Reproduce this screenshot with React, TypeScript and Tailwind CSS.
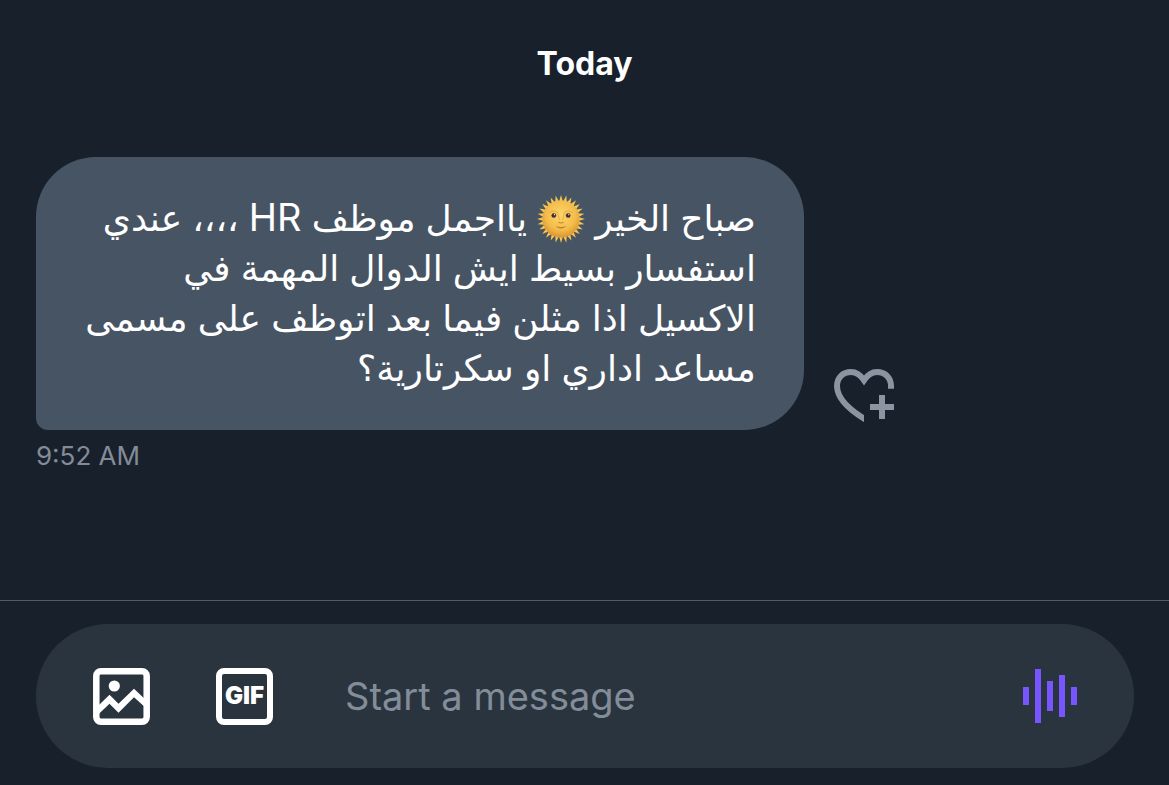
import { useState } from 'react';

interface Message {
  id: string;
  time: string;
}

const messages: Message[] = [{ id: 'm1', time: '9:52 AM' }];

const RAY_COUNT = 28;

const rays = Array.from({ length: RAY_COUNT }, (_, i) => (i * 360) / RAY_COUNT);

function SunFace() {
  return (
    <svg viewBox="0 0 48 48" role="img" aria-label="🌞" className="inline-block size-12 align-[-12px]">
      <defs>
        <radialGradient id="sun-face" cx="0.5" cy="0.4" r="0.6">
          <stop offset="0" stopColor="#fbd768" />
          <stop offset="0.65" stopColor="#f3bd4c" />
          <stop offset="1" stopColor="#dd9430" />
        </radialGradient>
      </defs>
      {rays.map((angle) => (
        <path key={angle} d="M22 7 L24 0 L26 7 Z" fill="#f8c651" transform={`rotate(${angle} 24 24)`} />
      ))}
      <circle cx="24" cy="24" r="18.6" fill="url(#sun-face)" />
      <path d="M12.5 17.5 Q16 14.5 20.5 17 L22.5 25" fill="none" stroke="#e0a344" strokeWidth="0.8" />
      <path d="M35.5 17.5 Q32 14.5 27.5 17 L25.5 25" fill="none" stroke="#e0a344" strokeWidth="0.8" />
      <path d="M21.5 27 Q24 29 26.5 27" fill="none" stroke="#c78327" strokeWidth="1.1" />
      <path d="M18.5 31 Q24 36 29.5 31 Q24 33 18.5 31 Z" fill="#c87a25" />
      <ellipse cx="16.8" cy="20.5" rx="3" ry="2" fill="#e9b56b" />
      <ellipse cx="31.2" cy="20.5" rx="3" ry="2" fill="#e9b56b" />
      <circle cx="16.8" cy="20.5" r="2.3" fill="#4b2a2d" />
      <circle cx="31.2" cy="20.5" r="2.3" fill="#4b2a2d" />
      <circle cx="17.4" cy="19.7" r="0.6" fill="#fff" />
      <circle cx="31.8" cy="19.7" r="0.6" fill="#fff" />
    </svg>
  );
}

function HeartPlusIcon() {
  return (
    <svg viewBox="0 0 60 54" className="h-[54px] w-[60px]" aria-hidden="true">
      <clipPath id="heart-cut">
        <path d="M0 0 H60 V22 H30 V54 H0 Z" />
      </clipPath>
      <path
        d="M34 53 C15 42 3 31 3 18 C3 9.5 9 4 17 4 C22.5 4 26.5 7 30 12.2 C33.5 7 37.5 4 43 4 C51 4 57 9.5 57 18 V20.7"
        fill="none"
        stroke="currentColor"
        strokeWidth="6"
        clipPath="url(#heart-cut)"
      />
      <path d="M45 27 H51 V36 H60 V42 H51 V51 H45 V42 H36 V36 H45 Z" fill="currentColor" />
    </svg>
  );
}

function ImageIcon() {
  return (
    <svg viewBox="0 0 57 57" className="size-[57px]" aria-hidden="true">
      <rect x="3.3" y="3.3" width="50.4" height="50.4" rx="4.6" fill="none" stroke="currentColor" strokeWidth="6.5" />
      <circle cx="21.3" cy="18" r="5.6" fill="currentColor" />
      <path
        d="M6 37 L16.5 26.7 L25.5 35.7 L41 20.7 L51 30.2 V38.2 L41 29.3 L25.5 44.7 L16.5 35.7 L6 45.7 Z"
        fill="currentColor"
      />
    </svg>
  );
}

function VoiceIcon() {
  return (
    <svg viewBox="0 0 54 54" className="size-[54px]" fill="currentColor" aria-hidden="true">
      <rect x="0" y="18" width="6" height="18" />
      <rect x="12" y="0" width="6" height="54" />
      <rect x="24" y="12" width="6" height="30" />
      <rect x="36" y="6" width="6" height="42" />
      <rect x="48" y="18" width="6" height="18" />
    </svg>
  );
}

function MessageRow({ message }: { message: Message }) {
  return (
    <article>
      <div className="flex items-end gap-[30px]">
        <p
          dir="rtl"
          lang="ar"
          className="w-[70%] rounded-[60px] rounded-bl-xl bg-[#475463] px-12 pt-9 pb-[37px] font-['Inter','DejaVu_Sans',sans-serif] text-[36px] leading-[50px] text-white"
        >
          صباح الخير <SunFace /> يااجمل موظف <span className="text-[38px] leading-10">HR</span> ،،،، عندي
          <br />
          استفسار بسيط ايش الدوال المهمة في
          <br />
          الاكسيل اذا مثلن فيما بعد اتوظف على مسمى
          <br />
          مساعد اداري او سكرتارية؟
        </p>
        <button type="button" aria-label="Add reaction" className="mb-2 shrink-0 text-[#8b95a2]">
          <HeartPlusIcon />
        </button>
      </div>
      <time className="mt-2 block text-[26px] leading-9 text-[#838b98]">{message.time}</time>
    </article>
  );
}

export default function App() {
  const [draft, setDraft] = useState('');

  return (
    <div className="flex min-h-screen flex-col bg-[#18202b] font-['Inter',sans-serif]">
      <main className="flex-1 px-9 pt-11">
        <h2 className="mb-[73px] text-center text-[32px] leading-10 font-bold text-white">Today</h2>
        {messages.map((message) => (
          <MessageRow key={message.id} message={message} />
        ))}
      </main>

      <footer className="border-t border-[#535b66] pt-[23px] pr-[35px] pb-[17px] pl-9">
        <form
          onSubmit={(e) => e.preventDefault()}
          className="flex h-36 items-center rounded-full bg-[#2a343f] px-[57px]"
        >
          <button type="button" aria-label="Add photo" className="shrink-0 text-white">
            <ImageIcon />
          </button>
          <button
            type="button"
            className="ml-[66px] flex size-[57px] shrink-0 items-center justify-center rounded-lg border-[6px] border-white text-[24px] font-black text-white"
          >
            GIF
          </button>
          <input
            type="text"
            aria-label="Start a message"
            placeholder="Start a message"
            value={draft}
            onChange={(e) => setDraft(e.target.value)}
            className="mx-[72px] min-w-0 flex-1 bg-transparent text-[38px] leading-[50px] text-white outline-none placeholder:text-[#838d99]"
          />
          <button type="button" aria-label="Record voice message" className="shrink-0 text-[#7856ff]">
            <VoiceIcon />
          </button>
        </form>
      </footer>
    </div>
  );
}
